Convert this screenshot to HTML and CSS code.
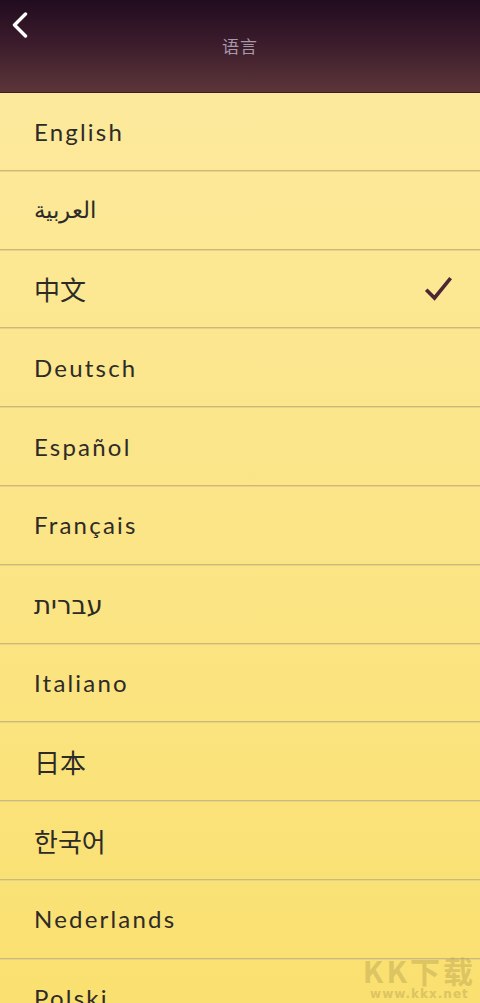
FILE: index.html
```html
<!DOCTYPE html>
<html lang="zh">
<head>
<meta charset="utf-8">
<link rel="stylesheet" href="styles.css">
</head>
<body>
<div class="app">
  <header class="topbar">
    <button class="back" aria-label="返回">
      <svg width="18" height="26" viewBox="0 0 18 26"><path d="M14.5 2 L3.5 13 L14.5 24" fill="none" stroke="#fff" stroke-width="3.4" stroke-linecap="round" stroke-linejoin="round"/></svg>
    </button>
    <h1 class="title">语言</h1>
  </header>
  <ul class="langs">
    <li class="lang">English</li>
    <li class="lang rtl">العربية</li>
    <li class="lang cjk selected">中文
      <svg class="check" width="28" height="26" viewBox="0 0 28 26"><path d="M3.5 15 L10.5 22 L25.5 3.5" fill="none" stroke="#4c2631" stroke-width="3.6" stroke-linecap="square"/></svg>
    </li>
    <li class="lang">Deutsch</li>
    <li class="lang">Español</li>
    <li class="lang">Français</li>
    <li class="lang rtl hebrew">עברית</li>
    <li class="lang">Italiano</li>
    <li class="lang cjk">日本</li>
    <li class="lang cjk">한국어</li>
    <li class="lang">Nederlands</li>
    <li class="lang">Polski</li>
  </ul>
  <div class="watermark">
    <span class="wm-logo">KK下载</span>
    <span class="wm-url">www.kkx.net</span>
  </div>
</div>
</body>
</html>
```
FILE: styles.css
```css
* { box-sizing: border-box; }
html, body { margin: 0; padding: 0; }
body {
  width: 480px;
  height: 1003px;
  overflow: hidden;
  font-family: Lato, "Noto Sans", "Noto Sans CJK SC", sans-serif;
  background: #fae073;
}
.app {
  position: relative;
  height: 1003px;
  overflow: hidden;
  background: linear-gradient(180deg, #fdeaa0 0%, #fae070 100%);
}
.topbar {
  height: 93px;
  background: linear-gradient(180deg, #210c1f 0%, #3a1b2b 45%, #5c3539 100%);
  border-bottom: 1px solid #3e1a2c;
  position: relative;
  display: flex;
  justify-content: center;
}
.back {
  position: absolute;
  left: 11px;
  top: 12px;
  background: none;
  border: 0;
  padding: 0;
  width: 20px;
  height: 28px;
  display: flex;
}
.title {
  margin: 35px 0 0;
  font-family: "Noto Sans CJK SC", sans-serif;
  font-weight: 400;
  font-size: 17px;
  line-height: 22px;
  color: #a699aa;
  letter-spacing: 1px;
}
.langs {
  list-style: none;
  margin: 0;
  padding: 0;
}
.lang {
  height: 78.8px;
  border-bottom: 1px solid #cdb974;
  box-shadow: 0 1px 0 #e6d38a;
  display: flex;
  align-items: center;
  justify-content: space-between;
  padding: 0 28px 0 34px;
  font-size: 24px;
  font-weight: 400;
  color: #2d2b27;
  letter-spacing: 2.2px;
}
.lang:first-child { height: 77.8px; }
.rtl {
  letter-spacing: 0;
  font-size: 22.5px;
  justify-content: flex-start;
}
.hebrew {
  font-family: "Noto Sans", "DejaVu Sans", sans-serif;
  font-size: 26px;
}
.cjk {
  font-family: "Noto Sans CJK SC", "Noto Sans CJK KR", sans-serif;
  font-size: 26px;
  font-weight: 400;
  letter-spacing: 0;
}
.check { display: block; margin-top: 2px; }
.watermark {
  position: absolute;
  right: 4px;
  bottom: 2px;
  display: flex;
  flex-direction: column;
  align-items: center;
  opacity: 0.45;
}
.wm-logo {
  font-family: "Noto Sans CJK SC", sans-serif;
  font-size: 30px;
  font-weight: 700;
  color: #b8a450;
  letter-spacing: 3px;
  line-height: 34px;
}
.wm-url {
  font-family: "DejaVu Sans", sans-serif;
  font-weight: 700;
  font-size: 12px;
  line-height: 14px;
  color: #b8a450;
  letter-spacing: 1px;
}
```
